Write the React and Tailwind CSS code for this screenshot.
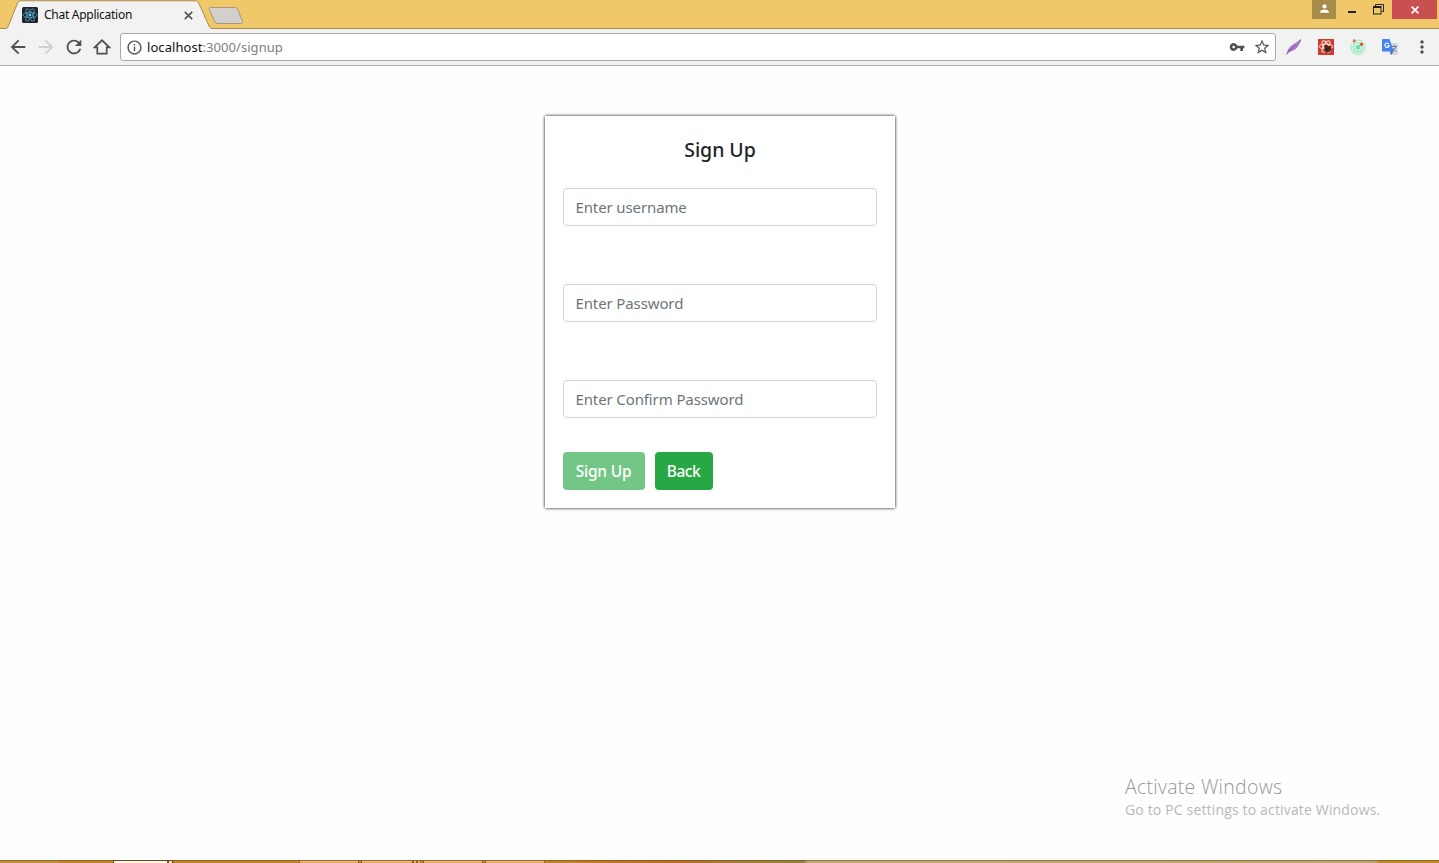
import React from "react";
import { MdArrowBack, MdArrowForward, MdRefresh, MdInfoOutline, MdVpnKey, MdStarBorder, MdMoreVert, MdPerson } from "react-icons/md";

const inputClass =
  "block h-[38px] w-full rounded-[4px] border border-[#ced4da] bg-white px-3 pb-px text-[15px] tracking-[-0.12px] text-[#495057] placeholder:text-[#6c757d] placeholder:opacity-100 outline-none";

function ReactLogo() {
  return (
    <svg width="16" height="16" viewBox="0 0 16 16" className="shrink-0">
      <rect width="16" height="16" rx="1.5" fill="#20232a" />
      <g fill="none" stroke="#4fa9c2" strokeWidth="0.8">
        <ellipse cx="8" cy="8" rx="7" ry="2.7" />
        <ellipse cx="8" cy="8" rx="7" ry="2.7" transform="rotate(60 8 8)" />
        <ellipse cx="8" cy="8" rx="7" ry="2.7" transform="rotate(120 8 8)" />
      </g>
      <circle cx="8" cy="8" r="1.4" fill="#61dafb" />
    </svg>
  );
}

function TabStrip() {
  return (
    <div className="flex h-[29px] items-start bg-[#f0c869] shadow-[inset_0_-1px_0_#a88c4e]">
      <div className="relative ml-[6px] h-[29px] w-[206px]">
        <svg className="absolute inset-0" width="206" height="29" viewBox="0 0 206 29">
          <path d="M0 29V28.5C2 28 2.4 26 3 24.5L11.5 3Q12.3 .8 14.5 .8H189.5Q191.8 .8 192.7 3L203 26Q204 28.4 206 28.5V29Z" fill="#f2f2f2" />
          <path d="M0 28.5C2 28 2.4 26 3 24.5L11.5 3Q12.3 .8 14.5 .8H189.5Q191.8 .8 192.7 3L203 26Q204 28.4 206 28.5" fill="none" stroke="#a88c4e" />
        </svg>
        <div className="relative flex h-[29px] items-center pl-4">
          <ReactLogo />
          <span className="ml-[6px] w-[140px] whitespace-nowrap text-[12px] leading-4 tracking-[-0.27px] text-[#111]">Chat Application</span>
          <svg width="9" height="9" viewBox="0 0 9 9" className="mt-px shrink-0">
            <path d="M.8 .8 8.2 8.2M8.2 .8.8 8.2" stroke="#555" strokeWidth="1.7" />
          </svg>
        </div>
      </div>
      <svg width="36" height="18" viewBox="0 0 36 18" className="-ml-[4px] mt-[7px]">
        <path d="M2.8 .5H27Q29 .5 29.8 2.3L34.5 14.5Q35.2 16.5 33 16.5H10Q7.8 16.5 7 14.8L1.3 2.6Q.6 .5 2.8 .5Z" fill="#d2d0cd" stroke="#a99976" />
      </svg>
      <div className="ml-auto flex h-[19px] items-start">
        <div className="flex h-[19px] w-6 items-center justify-center bg-[#a78b49]">
          <MdPerson size={13} color="#fff" className="-mt-[3px]" />
        </div>
        <div className="flex h-[19px] w-8 items-start justify-center pt-[11px]">
          <div className="h-[2px] w-2 bg-[#222]" />
        </div>
        <div className="flex h-[19px] w-6 items-start pl-[5px] pt-1">
          <svg width="11" height="11" viewBox="0 0 11 11">
            <path d="M2.5 2V.5H10.5V7.5H9" fill="none" stroke="#222" />
            <path d="M0 2H8.5V10.5H0ZM1 4V9.5H7.5V4Z" fill="#222" fillRule="evenodd" />
          </svg>
        </div>
        <div className="mr-[2px] flex h-[19px] w-[45px] items-center justify-center bg-[#c85050]">
          <svg width="8" height="8" viewBox="0 0 8 8">
            <path d="M.6 .6 7.4 7.4M7.4 .6.6 7.4" stroke="#fff" strokeWidth="1.6" />
          </svg>
        </div>
      </div>
    </div>
  );
}

function Extensions() {
  return (
    <div className="flex items-center gap-4">
      <svg width="16" height="16" viewBox="0 0 16 16">
        <path d="M.6 15.4 1.6 12C2 7.5 8 4.8 15 .5 14.4 3 13.8 5 12 7 11 9.6 8.5 11 6.5 11.8 5 12.8 3.5 13 2.5 13.4Z" fill="#a675c8" />
        <path d="M.6 15.4C4 10 8 7 15 .5" fill="none" stroke="#663399" strokeWidth=".8" />
        <path d="M3 10.5C5 7 9 5.5 12.5 3" fill="none" stroke="#d0b1e2" strokeWidth=".8" />
      </svg>
      <svg width="16" height="16" viewBox="0 0 16 16">
        <rect width="16" height="16" rx=".7" fill="#d0392f" />
        <g fill="none" stroke="#fae1dd" strokeWidth="1">
          <ellipse cx="8" cy="7.5" rx="6.8" ry="2.6" />
          <ellipse cx="8" cy="7.5" rx="6.3" ry="2.6" transform="rotate(60 8 7.5)" />
          <ellipse cx="8" cy="7.5" rx="6.3" ry="2.6" transform="rotate(120 8 7.5)" />
        </g>
        <path d="M6.5 7.5 8 6 10 7 12 7 12.6 8.4 13.4 10 12.4 11.4 11.6 12.8 9.6 13 7.8 13.5 7 11.6 6 10.3 7 9Z" fill="#302015" />
        <path d="m8 9 3-1M9 12l3-2" stroke="#8e3024" strokeWidth=".8" />
      </svg>
      <svg width="16" height="16" viewBox="0 0 16 16" fill="none">
        <circle cx="8" cy="8.2" r="7.1" stroke="#a1efc1" strokeWidth="1.2" />
        <circle cx="8" cy="8.2" r="4.7" stroke="#79e9a7" strokeWidth="1.1" />
        <circle cx="8" cy="8.2" r="2.5" fill="#5ce6b0" />
        <circle cx="4.2" cy="1.9" r="1.6" fill="#ee7043" />
        <circle cx="11.4" cy="5.2" r="1.7" fill="#e84b3c" />
      </svg>
      <svg width="16" height="16" viewBox="0 0 16 16">
        <path d="M7 4H15.3Q16 4 16 4.8V15.2Q16 16 15.2 16H9Z" fill="#d5dae2" />
        <path d="M.8 0H7.6L11.7 12.5H.8Q0 12.5 0 11.7V.8Q0 0 .8 0Z" fill="#4384ee" />
        <path d="M7.8 12.5H11.7L9 16Z" fill="#3367c8" />
        <path d="M9.5 7.5H15M12.2 6V7.5M14 7.5Q13 11 9.8 12.2M10.8 9Q12 11.5 14.5 12.8" fill="none" stroke="#62758c" strokeWidth=".9" />
        <path d="M6.8 4.9A2.2 2.2 0 1 0 7.2 6.6H5.2" fill="none" stroke="#fff" strokeWidth="1.1" />
      </svg>
    </div>
  );
}

function Toolbar() {
  return (
    <div className="flex h-[37px] items-center border-b border-[#b5b5b5] bg-[#f2f2f2] pl-[7px] text-[#505050]">
      <MdArrowBack size={22} className="mr-[6px]" />
      <MdArrowForward size={22} className="mr-[6px] text-[#d0d0d0]" />
      <MdRefresh size={22} className="mr-[8px]" />
      <svg width="18" height="18" viewBox="0 0 18 18" className="mr-[9px]">
        <path d="M1.6 9.4 9 2.3 16.4 9.4H13.7V15.6H4.3V9.4Z" fill="none" stroke="currentColor" strokeWidth="1.7" />
      </svg>
      <div className="flex h-7 w-[1156px] items-center rounded-[3px] border border-[#a9a9a9] bg-white pl-[5px] pr-[4px]">
        <MdInfoOutline size={17} />
        <span className="ml-1 whitespace-nowrap text-[13px] leading-5 tracking-[0.06px] text-[#808080]">
          <span className="text-[#111]">localhost</span>:3000/signup
        </span>
        <MdVpnKey size={16} className="ml-auto" />
        <MdStarBorder size={18} className="ml-2" />
      </div>
      <div className="ml-[10px]">
        <Extensions />
      </div>
      <MdMoreVert size={20} className="ml-[14px]" />
    </div>
  );
}

function SignUpCard() {
  return (
    <form className="mt-[50px] flex h-[392px] w-[350px] flex-col bg-white px-[18px] pt-[22px] shadow-[0_0_3px_#000]" onSubmit={(e) => e.preventDefault()}>
      <h1 className="pl-px text-center text-[19.5px] font-medium leading-6 tracking-[-0.05px] text-[#212529]">Sign Up</h1>
      <div className="mt-[26px] flex flex-col gap-[58px]">
        <input className={inputClass} placeholder="Enter username" />
        <input className={inputClass} type="password" placeholder="Enter Password" />
        <input className={inputClass} type="password" placeholder="Enter Confirm Password" />
      </div>
      <div className="mt-[34px] flex gap-[10px] text-[15.5px] font-medium tracking-[-0.2px] text-white">
        <button type="button" className="h-[38px] w-[82px] rounded-[4px] bg-[#74c686] pt-[2px]">Sign Up</button>
        <button type="button" className="h-[38px] w-[58px] rounded-[4px] bg-[#28a745] pt-[2px] tracking-[-0.5px]">Back</button>
      </div>
    </form>
  );
}

function TaskButton({ className }) {
  return <div className={`h-[3px] border border-b-0 border-[#8f6426] bg-[#dba55a] shadow-[inset_0_1px_0_#e9c18b] ${className}`} />;
}

function Taskbar() {
  return (
    <div className="flex h-[3px] items-start bg-[linear-gradient(90deg,#bc9240_0,#bc9240_56px,#bd842b_60px,#bd842b_545px,#b66d27_680px,#a37c38_720px,#96803f_804px,#c0a970_808px,#bda66c_1374px,#b9892e_1380px,#bb8a28_100%)] shadow-[inset_0_1px_0_rgba(90,60,20,0.4)]">
      <div className="ml-[113px] h-[3px] w-[55px] border border-b-0 border-[#6b4a20] bg-[#fff4df]" />
      <div className="h-[3px] w-[5px] border border-b-0 border-[#6b4a20] bg-[#f4dfba]" />
      <TaskButton className="ml-[126px] w-[60px]" />
      <TaskButton className="ml-[2px] w-[52px]" />
      <TaskButton className="w-[4px]" />
      <TaskButton className="w-[4px]" />
      <TaskButton className="ml-[2px] w-[60px]" />
      <TaskButton className="ml-[2px] w-[60px]" />
    </div>
  );
}

export default function App() {
  return (
    <div className="relative flex h-[863px] w-[1439px] flex-col overflow-hidden bg-[#fefefe] font-['Noto_Sans','Open_Sans',sans-serif]">
      <TabStrip />
      <Toolbar />
      <main className="flex flex-1 flex-col items-center">
        <SignUpCard />
      </main>
      <div className="absolute left-[1125px] top-[774px] whitespace-nowrap font-['Open_Sans',sans-serif]">
        <div className="text-[19.5px] font-light leading-[26px] tracking-[0.27px] text-[#989898]">Activate Windows</div>
        <div className="text-[14px] leading-5 tracking-[0.16px] text-[#b8b8b8]">Go to PC settings to activate Windows.</div>
      </div>
      <Taskbar />
    </div>
  );
}
